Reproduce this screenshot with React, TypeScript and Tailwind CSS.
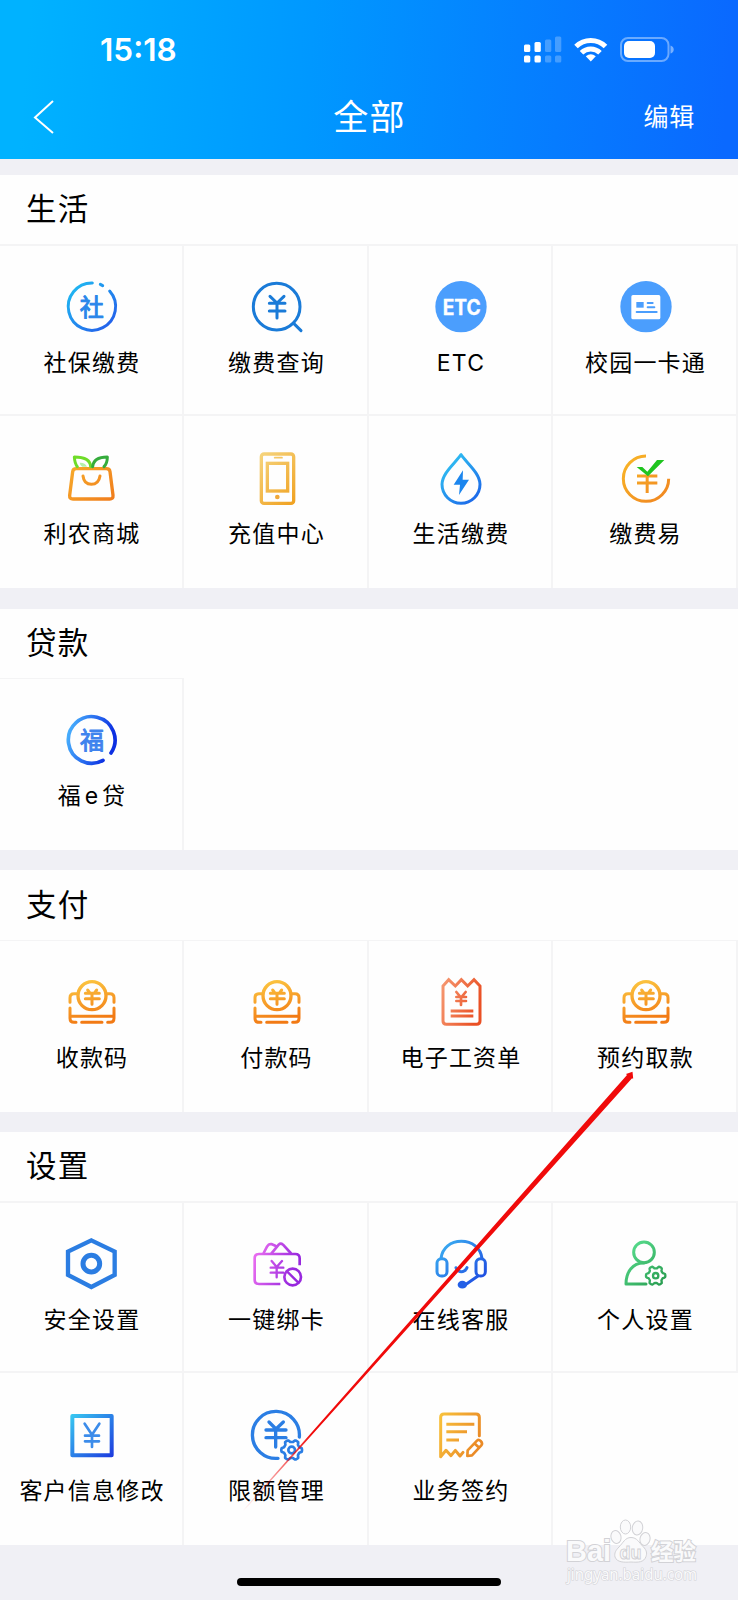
import type { ReactNode } from "react";

type GradProps = { id: string; from: string; to: string; x2?: number; y2?: number };

function Grad({ id, from, to, x2 = 1, y2 = 1, box }: GradProps & { box: [number, number] }) {
  const [x, y] = box;
  return (
    <defs>
      <linearGradient
        id={id}
        gradientUnits="userSpaceOnUse"
        x1={x + 12}
        y1={y + 12}
        x2={x + 12 + 138 * x2}
        y2={y + 12 + 138 * y2}
      >
        <stop offset="0" stopColor={from} />
        <stop offset="1" stopColor={to} />
      </linearGradient>
    </defs>
  );
}

function Icon({
  x,
  y,
  w = 9,
  color,
  grad,
  children,
}: {
  x: number;
  y: number;
  w?: number;
  color?: string;
  grad?: GradProps;
  children: ReactNode;
}) {
  const paint = grad ? `url(#${grad.id})` : color;
  return (
    <svg
      className="block h-[54px] w-[54px] overflow-visible"
      viewBox={`${x} ${y} 162 162`}
      fill="none"
      stroke={paint}
      strokeWidth={w}
      strokeLinecap="round"
      strokeLinejoin="round"
    >
      {grad && <Grad {...grad} box={[x, y]} />}
      {children}
    </svg>
  );
}

function gearPath(cx: number, cy: number, r: number, depth: number) {
  const pts: string[] = [];
  for (let i = 0; i <= 72; i++) {
    const a = (i / 72) * Math.PI * 2;
    const wave = Math.max(-1, Math.min(1, 1.7 * Math.cos(6 * a)));
    const rr = r + depth * wave;
    pts.push(`${(cx + rr * Math.cos(a)).toFixed(1)} ${(cy + rr * Math.sin(a)).toFixed(1)}`);
  }
  return `M${pts.join("L")}Z`;
}

const SocialIcon = () => (
  <Icon x={193} y={120} grad={{ id: "g-social", from: "#1fc0f2", to: "#2458ea" }}>
    <path d="M278 129A71 71 0 1 0 330 153M302 133l7 4" />
    <text x="276" y="228" textAnchor="middle" fontSize="72" stroke="#2a86ea" strokeWidth="3" fill="#2a86ea" className="font-['Noto_Sans_CJK_SC',sans-serif]">社</text>
  </Icon>
);

const SearchYuanIcon = () => (
  <Icon x={746} y={120} color="#1a7bd8">
    <circle cx="829" cy="200" r="70" />
    <path d="M880 250l22 22M809 169l21 20 21-20M807 190h47M807 213h47M830 190v44" />
  </Icon>
);

const EtcIcon = () => (
  <Icon x={196} y={120} color="#4b9efd">
    <circle cx="280" cy="200" r="77" fill="#4b9efd" stroke="none" />
    <text x="225" y="224" textLength="114" lengthAdjust="spacingAndGlyphs" fontSize="63" stroke="#fff" strokeWidth="1" fill="#fff" className="font-['Inter',sans-serif] font-bold">ETC</text>
  </Icon>
);

const CampusIcon = () => (
  <Icon x={749} y={120} w={6} color="#4b9efd">
    <circle cx="833" cy="200" r="77" fill="#4b9efd" stroke="none" />
    <rect x="789" y="165" width="87" height="73" rx="5" fill="#fff" stroke="none" />
    <rect x="804" y="186" width="22" height="17" fill="#4b9efd" stroke="none" />
    <path d="M838 189h15M838 202h20M805 216h60" />
  </Icon>
);

const BagIcon = () => (
  <Icon x={193} y={123} grad={{ id: "g-bag", from: "#f8b22c", to: "#f07c1c" }}>
    <path strokeWidth="10" d="M230 176h90q10 0 11 9l9 71q1 11-10 11H220q-11 0-10-11l9-71q1-9 11-9z" />
    <path d="M250 198q3 25 25 25t26-25" />
    <path d="M273 170c-1-22-22-29-49-29 1 15 4 23 9 29" stroke="#6fdc28" />
    <path d="M279 170c2-22 20-29 44-29 0 14-4 23-10 29" stroke="#35ac3c" />
    <path d="M240 158q16-1 22 12h-14q-7-3-8-12z" fill="#b5f0a8" stroke="none" />
  </Icon>
);

const PhoneIcon = () => (
  <Icon x={746} y={123} w={10} grad={{ id: "g-phone", from: "#f6d884", to: "#f0a01e" }}>
    <rect x="783" y="132" width="97" height="148" rx="8" />
    <rect x="801" y="160" width="61" height="83" strokeLinejoin="miter" />
    <path strokeWidth="5" d="M823 143h22" />
    <circle cx="831" cy="261" r="7" fill="#f0a83a" stroke="none" />
  </Icon>
);

const DropIcon = () => (
  <Icon x={196} y={123} grad={{ id: "g-drop", from: "#34d4f4", to: "#1a5ee8" }}>
    <path d="M280 134C262 160 223 190 223 223a57 57 0 0 0 114 0C337 190 298 160 280 134z" />
    <path d="M286 181l-28 43h19l-3 31 30-46h-19z" fill="#1c86ee" stroke="none" />
  </Icon>
);

const EasyPayIcon = () => (
  <Icon x={749} y={123} grad={{ id: "g-easy", from: "#f9b928", to: "#f08420" }}>
    <path strokeLinecap="butt" d="M833 138A68 68 0 1 0 901 206M806 198h61M806 219h61M836.500 195v54" />
    <path d="M805 171h17l15 14 29-35h22l-49 49z" fill="#1fc41f" stroke="none" />
  </Icon>
);

const LoanIcon = () => (
  <Icon x={193} y={339} w={11} grad={{ id: "g-loan", from: "#4dbbff", to: "#0c2fe2", y2: 0.3 }}>
    <path d="M334 459A70 70 0 1 0 310 481" />
    <text x="277" y="448" textAnchor="middle" fontSize="72" stroke="#3f83ee" strokeWidth="3" fill="#3f83ee" className="font-['Noto_Sans_CJK_SC',sans-serif]">福</text>
  </Icon>
);

const CoinIcon = ({ id }: { id: string }) => (
  <Icon x={193} y={312} w={9} grad={{ id, from: "#fdd046", to: "#f27a14", x2: 0.25 }}>
    <circle cx="277" cy="377" r="42" strokeWidth="10" />
    <path d="M264 360l6 8M291 360l-6 8M257 370h42M257 386h42M277 371v32" />
    <path d="M211 397v-14q0-12 12-12h11M343 397v-14q0-12-12-12h-11" />
    <path d="M211 414v31q0 12 12 12h6M343 414v31q0 12-12 12h-7M213 439h128M246 457h61" />
  </Icon>
);

const PayrollIcon = () => (
  <Icon x={196} y={312} grad={{ id: "g-payroll", from: "#f7a27c", to: "#ea5024", y2: 0.3 }}>
    <path strokeLinejoin="miter" d="M226 348l17-19 20 19 18-19 19 19 19-19 18 19v105q0 10-10 10H236q-10 0-10-10z" />
    <path strokeWidth="8" d="M266 366l14 17 14-17M266 381h29M266 393h29M280 384v21" />
    <path strokeLinecap="butt" d="M249 423h68M249 438h68" />
  </Icon>
);

const SecurityIcon = () => (
  <Icon x={193} y={321} w={13} color="#2b7de2">
    <path strokeLinejoin="miter" d="M275 331l70 34v70l-70 36-70-36v-70z" />
    <circle cx="275" cy="401" r="25" strokeWidth="15" />
  </Icon>
);

const BindCardIcon = () => (
  <Icon x={746} y={321} w={8} grad={{ id: "g-bind", from: "#f376f2", to: "#9828de", y2: 0.3 }}>
    <path strokeLinecap="butt" d="M840 462h-64q-13 0-13-13v-64q0-13 13-13h109q13 0 13 13v21" />
    <path d="M790 369l10-19q5-9 13-8l12 5M813 371l22-27q6-6 13 0l23 25" />
    <path strokeWidth="7" d="M814 393l15 18 16-18M811 413h38M811 428h38M829 411v31" />
    <circle cx="877" cy="441" r="25" />
    <path strokeWidth="7" d="M860 424l34 34" />
  </Icon>
);

const ServiceIcon = () => (
  <Icon x={196} y={321} grad={{ id: "g-service", from: "#3cb6f2", to: "#1c44e0" }}>
    <path d="M220 385c4-32 29-51 61-51s58 19 62 51" />
    <rect x="208" y="386" width="30" height="52" rx="13" />
    <rect x="325" y="386" width="28" height="52" rx="13" />
    <path d="M331 438l-38 26M265 413q4 12 16 12t17-12" />
    <ellipse cx="284" cy="464" rx="14" ry="11.500" fill="#235fe6" stroke="none" />
  </Icon>
);

const ProfileIcon = () => (
  <Icon x={749} y={321} grad={{ id: "g-profile", from: "#5ee696", to: "#24964a" }}>
    <circle cx="827" cy="367" r="31" />
    <path d="M833 462h-60c0-37 21-64 54-63" />
    <path strokeWidth="7" d={gearPath(862, 437, 25.5, 3.5)} />
    <circle cx="862" cy="437" r="8" strokeWidth="7" />
  </Icon>
);

const CustomerInfoIcon = () => (
  <Icon x={193} y={144} w={12} grad={{ id: "g-customer", from: "#3ad2f2", to: "#1c36de" }}>
    <rect x="218" y="168" width="118" height="118" />
    <path stroke="#3c8cea" strokeWidth="8" d="M255 191l22 33 22-33M256 227h42M256 244h42M277 224v37" />
  </Icon>
);

const LimitIcon = () => (
  <Icon x={746} y={144} w={10} color="#2b7ee4">
    <path d="M897 231A70.500 70.500 0 1 0 833 295" />
    <path d="M806 186l21 21 22-21M797 210h60M797 233h60M826 209v52" />
    <path strokeWidth="8" d={gearPath(874, 270, 27.5, 3.5)} />
    <circle cx="874" cy="270" r="10" strokeWidth="8" />
  </Icon>
);

const ContractIcon = () => (
  <Icon x={196} y={144} grad={{ id: "g-contract", from: "#f9c63e", to: "#ea8a26", y2: 0.4 }}>
    <path d="M335 227v-55q0-10-10-10H229q-10 0-10 10v118l16-19 15 16 13-16 14 17 9-11" />
    <path strokeLinecap="butt" d="M236 193h84M236 215h62M236 240h38" />
    <path strokeWidth="8" d="M299 288l1-17 28-29q5-5 11 1 7 7 2 13l-28 30zM320 250l13 12" />
  </Icon>
);

type Item = { label: string; icon: ReactNode };

function Cell({ label, icon, className }: Item & { className: string }) {
  return (
    <div className={`flex flex-col items-center border-r-2 border-[#f4f4f5] ${className}`}>
      {icon}
      <span className="mt-[15px] pl-[2px] text-[23px] leading-[28px] tracking-[1.200px] whitespace-nowrap text-black [word-spacing:-5px]">{label}</span>
    </div>
  );
}

function Row({ items, className, cell }: { items: Item[]; className: string; cell: string }) {
  return (
    <div className={`grid grid-cols-[184px_185px_184px_185px] ${className}`}>
      {items.map((it) => (
        <Cell key={it.label} {...it} className={cell} />
      ))}
    </div>
  );
}

function Title({ children, className }: { children: string; className: string }) {
  return (
    <h2 className={`flex items-center pb-px pl-[26px] text-[30.500px] leading-[40px] tracking-[1.300px] text-black ${className}`}>{children}</h2>
  );
}

function StatusIcons() {
  return (
    <svg className="h-[28px] w-[152px]" viewBox="523 35 152 28" fill="#fff">
      <rect x="524" y="44.500" width="6.300" height="7.500" rx="1.500" />
      <rect x="534.500" y="42" width="6.300" height="10" rx="1.500" />
      <g opacity=".25">
        <rect x="545" y="39.500" width="6.300" height="12.500" rx="1.500" />
        <rect x="555" y="36.500" width="6.300" height="15.500" rx="1.500" />
        <rect x="545" y="55.500" width="6.300" height="7" rx="1.500" />
        <rect x="555" y="55.500" width="6.300" height="7" rx="1.500" />
      </g>
      <rect x="524" y="55.500" width="6.300" height="7" rx="1.500" />
      <rect x="534.500" y="55.500" width="6.300" height="7" rx="1.500" />
      <g fill="none" stroke="#fff" strokeWidth="5">
        <path d="M576 46.500a21 21 0 0 1 29.500 0" />
        <path d="M581.500 52.800a13.200 13.200 0 0 1 18.500 0" />
      </g>
      <path d="M590.800 61.500l-5-5.200q5-4 10 0z" />
      <rect x="621" y="38" width="47.500" height="23" rx="7" fill="none" stroke="#fff" strokeOpacity=".4" strokeWidth="2" />
      <rect x="624" y="41" width="31" height="17" rx="5" />
      <path d="M670.500 45.500q3.200 1 3.200 4t-3.200 4z" opacity=".45" />
    </svg>
  );
}

function Watermark() {
  return (
    <div className="absolute top-[1518px] left-[565px] h-[68px] w-[136px]">
      <svg className="h-full w-full overflow-visible" viewBox="565 1518 136 68" fill="#fafafb" stroke="#d2d2d6" strokeWidth="1">
        <g className="[paint-order:stroke]" strokeWidth="2">
          <text x="566" y="1561" textLength="45" lengthAdjust="spacingAndGlyphs" fontSize="29" className="font-['Liberation_Sans',sans-serif] font-bold">Bai</text>
          <text x="651" y="1560" textLength="45" lengthAdjust="spacingAndGlyphs" fontSize="23" className="font-['Noto_Sans_CJK_SC',sans-serif] font-bold">经验</text>
          <text x="567" y="1580" textLength="130" lengthAdjust="spacingAndGlyphs" fontSize="15.500" strokeWidth="1.200" className="font-['Noto_Sans',sans-serif]">jingyan.baidu.com</text>
        </g>
        <ellipse cx="616" cy="1537" rx="5" ry="6.500" transform="rotate(-15 616 1537)" />
        <ellipse cx="625.500" cy="1527" rx="5.200" ry="7" />
        <ellipse cx="637.500" cy="1528" rx="5.200" ry="7" transform="rotate(8 637.500 1528)" />
        <ellipse cx="645" cy="1539" rx="5" ry="6.500" transform="rotate(15 645 1539)" />
        <path d="M631 1537.500c6 0 8 5 12 9s4 7 3 10c-2 6-8 6-15 5.500-7 .5-14 .5-16-5-1-4 1-7 4-10 4-4 6-9.500 12-9.500z" />
        <text x="619.500" y="1559" textLength="22" lengthAdjust="spacingAndGlyphs" fontSize="19" className="font-['Liberation_Sans',sans-serif] font-bold">du</text>
      </svg>
    </div>
  );
}

function Arrow() {
  return (
    <svg className="pointer-events-none absolute top-[1060px] left-[230px] h-[460px] w-[410px]" viewBox="230 1060 410 460">
      <defs>
        <linearGradient id="g-arrow" gradientUnits="userSpaceOnUse" x1="243" y1="1511" x2="312" y2="1433">
          <stop offset="0" stopColor="#f00a0a" stopOpacity="0" />
          <stop offset="0.4" stopColor="#f00a0a" stopOpacity="0.4" />
          <stop offset="1" stopColor="#f00a0a" />
        </linearGradient>
      </defs>
      <path d="M242.600 1510.600L627 1075L626 1074L632.500 1071.700L633.200 1078.600L631.800 1078.400L243.400 1511.400Z" fill="url(#g-arrow)" />
    </svg>
  );
}

export default function App() {
  return (
    <div className="relative h-[1600px] w-[738px] overflow-hidden bg-[#f0f0f5] font-['Inter','Noto_Sans_CJK_SC',sans-serif]">
      <header className="h-[159px] bg-[linear-gradient(94deg,#00b2ff_4%,#0098ff_42%,#0a69ff_98%)] text-white">
        <div className="flex h-[76px] items-start justify-between pt-[35px] pr-[63px] pl-[100px]">
          <span className="-mt-px text-[31.500px] leading-[31px] font-semibold">15:18</span>
          <StatusIcons />
        </div>
        <div className="grid h-[83px] grid-cols-3 items-center pr-[43px] pb-px pl-[33px]">
          <svg className="h-[36px] w-[22px]" viewBox="0 0 22 36" fill="none" stroke="#fff" strokeWidth="2">
            <path d="M20 2L2 18.500L20 34" />
          </svg>
          <h1 className="pl-[11px] text-center text-[35px] leading-[44px] tracking-[1.300px]">全部</h1>
          <span className="text-right text-[25px] leading-[34px] tracking-[0.800px]">编辑</span>
        </div>
      </header>

      <main>
        <section className="mt-[16px] bg-[#fefefe]">
          <Title className="h-[69px]">生活</Title>
          <Row
            className="h-[170px] border-t-2 border-[#f4f4f5]"
            cell="pt-[34px]"
            items={[
              { label: "社保缴费", icon: <SocialIcon /> },
              { label: "缴费查询", icon: <SearchYuanIcon /> },
              { label: "ETC", icon: <EtcIcon /> },
              { label: "校园一卡通", icon: <CampusIcon /> },
            ]}
          />
          <Row
            className="h-[174px] border-t-2 border-[#f4f4f5]"
            cell="pt-[35px]"
            items={[
              { label: "利农商城", icon: <BagIcon /> },
              { label: "充值中心", icon: <PhoneIcon /> },
              { label: "生活缴费", icon: <DropIcon /> },
              { label: "缴费易", icon: <EasyPayIcon /> },
            ]}
          />
        </section>

        <section className="mt-[21px] bg-[#fefefe]">
          <Title className="h-[69px]">贷款</Title>
          <Row className="h-[172px]" cell="border-t pt-[34px]" items={[{ label: "福 e 贷", icon: <LoanIcon /> }]} />
        </section>

        <section className="mt-[20px] bg-[#fefefe]">
          <Title className="h-[70px]">支付</Title>
          <Row
            className="h-[172px] border-t border-[#f4f4f5]"
            cell="pt-[33px] [&>span]:mt-[16px]"
            items={[
              { label: "收款码", icon: <CoinIcon id="g-coin-a" /> },
              { label: "付款码", icon: <CoinIcon id="g-coin-b" /> },
              { label: "电子工资单", icon: <PayrollIcon /> },
              { label: "预约取款", icon: <CoinIcon id="g-coin-c" /> },
            ]}
          />
        </section>

        <section className="mt-[20px] bg-[#fefefe]">
          <Title className="h-[69px]">设置</Title>
          <Row
            className="h-[170px] border-t-2 border-[#f4f4f5]"
            cell="pt-[34px]"
            items={[
              { label: "安全设置", icon: <SecurityIcon /> },
              { label: "一键绑卡", icon: <BindCardIcon /> },
              { label: "在线客服", icon: <ServiceIcon /> },
              { label: "个人设置", icon: <ProfileIcon /> },
            ]}
          />
          <Row
            className="h-[174px] border-t-2 border-[#f4f4f5]"
            cell="pt-[35px]"
            items={[
              { label: "客户信息修改", icon: <CustomerInfoIcon /> },
              { label: "限额管理", icon: <LimitIcon /> },
              { label: "业务签约", icon: <ContractIcon /> },
            ]}
          />
        </section>
      </main>

      <div className="mx-auto mt-[32.500px] h-[8.500px] w-[264px] rounded-full bg-black" />
      <Arrow />
      <Watermark />
    </div>
  );
}
